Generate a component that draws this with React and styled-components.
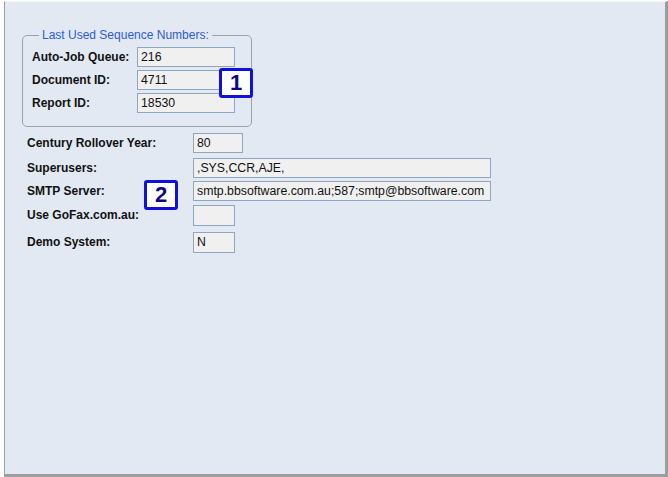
import React from 'react';
import styled, { createGlobalStyle } from 'styled-components';

const Global = createGlobalStyle`
  html, body { margin: 0; background: #fff; }
  body { font-family: Arial, "Liberation Sans", sans-serif; font-size: 12px; }
`;

const Panel = styled.div`
  position: relative;
  box-sizing: border-box;
  margin: 1px 0 0 4px;
  width: 664px;
  height: 476px;
  background: #e3e9f3;
  border-left: 1px solid #a0a0a0;
  border-top: 1px solid #f4f6fa;
  border-right: 3px solid #9c9c9c;
  border-bottom: 3px solid #9c9c9c;
  padding: 26px 0 0 17px;
`;

const Group = styled.fieldset`
  box-sizing: border-box;
  width: 230px;
  height: 99px;
  margin: 0;
  padding: 4px 0 0 9px;
  border: 1px solid #9aa3ad;
  border-radius: 5px;
  display: flex;
  flex-direction: column;
  gap: 2px;
`;

const Legend = styled.legend`
  color: #2b5ce0;
  font-size: 12px;
  padding: 0 3px;
  margin-left: 7px;
`;

const Row = styled.div`
  display: flex;
  align-items: center;
  height: ${p => p.h || 21}px;
  margin-top: ${p => p.mt || 0}px;
`;

const Label = styled.span`
  font-weight: bold;
  color: #111;
  width: ${p => p.w}px;
  flex-shrink: 0;
`;

const Field = styled.div`
  box-sizing: border-box;
  width: ${p => p.w}px;
  height: ${p => p.h || 20}px;
  border: 1px solid #8fa6c0;
  background: #f0f0f0;
  padding: 0 3px;
  display: flex;
  align-items: center;
  color: #111;
  font-size: 12.3px;
  white-space: nowrap;
  overflow: hidden;
`;

const Fields = styled.div`
  margin: 5px 0 0 5px;
  display: flex;
  flex-direction: column;
`;

const Badge = styled.div`
  position: absolute;
  left: ${p => p.x}px;
  top: ${p => p.y}px;
  box-sizing: border-box;
  width: 34px;
  height: 30px;
  border: 3px solid #1010e0;
  border-radius: 3px;
  background: #fff;
  color: #0a0a8a;
  font: bold 22px Arial, "Liberation Sans", sans-serif;
  display: flex;
  align-items: center;
  justify-content: center;
`;

export default function App() {
  return (
    <>
      <Global />
      <Panel>
        <Group>
          <Legend>Last Used Sequence Numbers:</Legend>
          <Row><Label w={105}>Auto-Job Queue:</Label><Field w={98}>216</Field></Row>
          <Row><Label w={105}>Document ID:</Label><Field w={98}>4711</Field></Row>
          <Row><Label w={105}>Report ID:</Label><Field w={98}>18530</Field></Row>
        </Group>
        <Fields>
          <Row h={21}><Label w={166}>Century Rollover Year:</Label><Field w={50}>80</Field></Row>
          <Row h={21} mt={4}><Label w={166}>Superusers:</Label><Field w={298}>,SYS,CCR,AJE,</Field></Row>
          <Row h={21} mt={2}><Label w={166}>SMTP Server:</Label><Field w={298}>smtp.bbsoftware.com.au;587;smtp@bbsoftware.com</Field></Row>
          <Row h={22} mt={3}><Label w={166}>Use GoFax.com.au:</Label><Field w={42} h={21}></Field></Row>
          <Row h={22} mt={5}><Label w={166}>Demo System:</Label><Field w={42} h={21}>N</Field></Row>
        </Fields>
        <Badge x={214} y={66}>1</Badge>
        <Badge x={139} y={178}>2</Badge>
      </Panel>
    </>
  );
}
